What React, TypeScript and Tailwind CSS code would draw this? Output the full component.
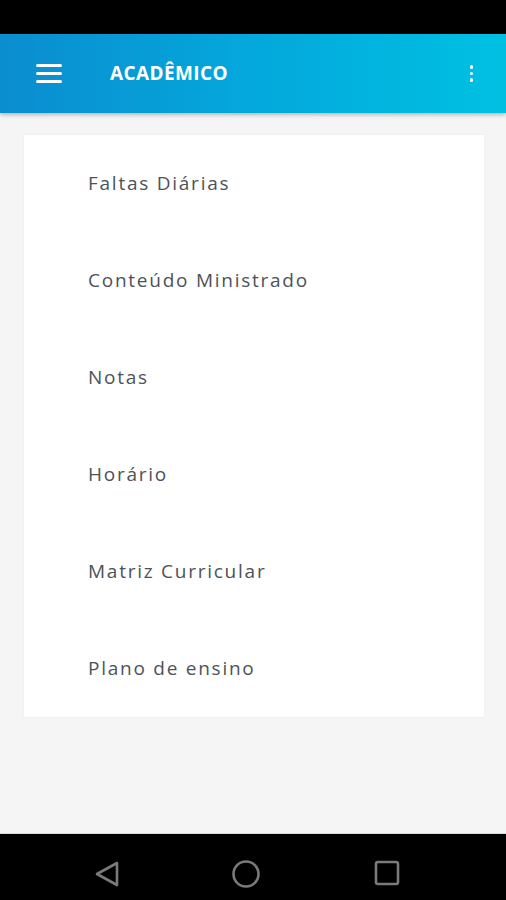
import React from "react";

const items = [
  "Faltas Diárias",
  "Conteúdo Ministrado",
  "Notas",
  "Horário",
  "Matriz Curricular",
  "Plano de ensino",
];

export default function App() {
  return (
    <div
      className="w-[506px] h-[900px] flex flex-col bg-[#f5f5f5] overflow-hidden"
      style={{ fontFamily: '"Open Sans", "Noto Sans", sans-serif' }}
    >
      <div className="h-[34px] bg-black shrink-0" />
      <div className="relative h-[79px] shrink-0 flex items-center bg-gradient-to-r from-[#0b8dd0] via-[#04a8dc] to-[#00c0e2] shadow-[0_2px_4px_rgba(0,0,0,0.25)] z-10">
        <div className="ml-[36px] w-[26px] flex flex-col gap-[5px]">
          <div className="h-[3px] bg-white rounded-sm" />
          <div className="h-[3px] bg-white rounded-sm" />
          <div className="h-[3px] bg-white rounded-sm" />
        </div>
        <div className="ml-[48px] text-white font-bold text-[19px] tracking-[0.4px]">
          ACADÊMICO
        </div>
        <div className="ml-auto mr-[33px] flex flex-col gap-[3px] items-center">
          <div className="w-[3.5px] h-[3.5px] bg-white rounded-full" />
          <div className="w-[3.5px] h-[3.5px] bg-white rounded-full" />
          <div className="w-[3.5px] h-[3.5px] bg-white rounded-full" />
        </div>
      </div>
      <div className="flex-1 pt-[22px] pl-[24px] pr-[22px]">
        <div className="bg-white shadow-[0_0_2px_rgba(0,0,0,0.06)] flex flex-col">
          {items.map((t) => (
            <div
              key={t}
              className="h-[97px] flex items-center pl-[64px] text-[19px] tracking-[1.75px] text-[#4d5258]"
            >
              {t}
            </div>
          ))}
        </div>
      </div>
      <div className="h-[67px] bg-black shrink-0 flex items-center justify-center border-t border-[#d8d8d8]">
        <svg width="506" height="66" viewBox="0 0 506 66">
          <path
            d="M117 29 L97 40 L117 51 Z"
            fill="none"
            stroke="#7a7a7a"
            strokeWidth="2.6"
            strokeLinejoin="round"
          />
          <circle cx="246" cy="40" r="12.5" fill="none" stroke="#7a7a7a" strokeWidth="2.6" />
          <rect x="376" y="28" width="22" height="22" rx="2" fill="none" stroke="#7a7a7a" strokeWidth="2.6" />
        </svg>
      </div>
    </div>
  );
}
